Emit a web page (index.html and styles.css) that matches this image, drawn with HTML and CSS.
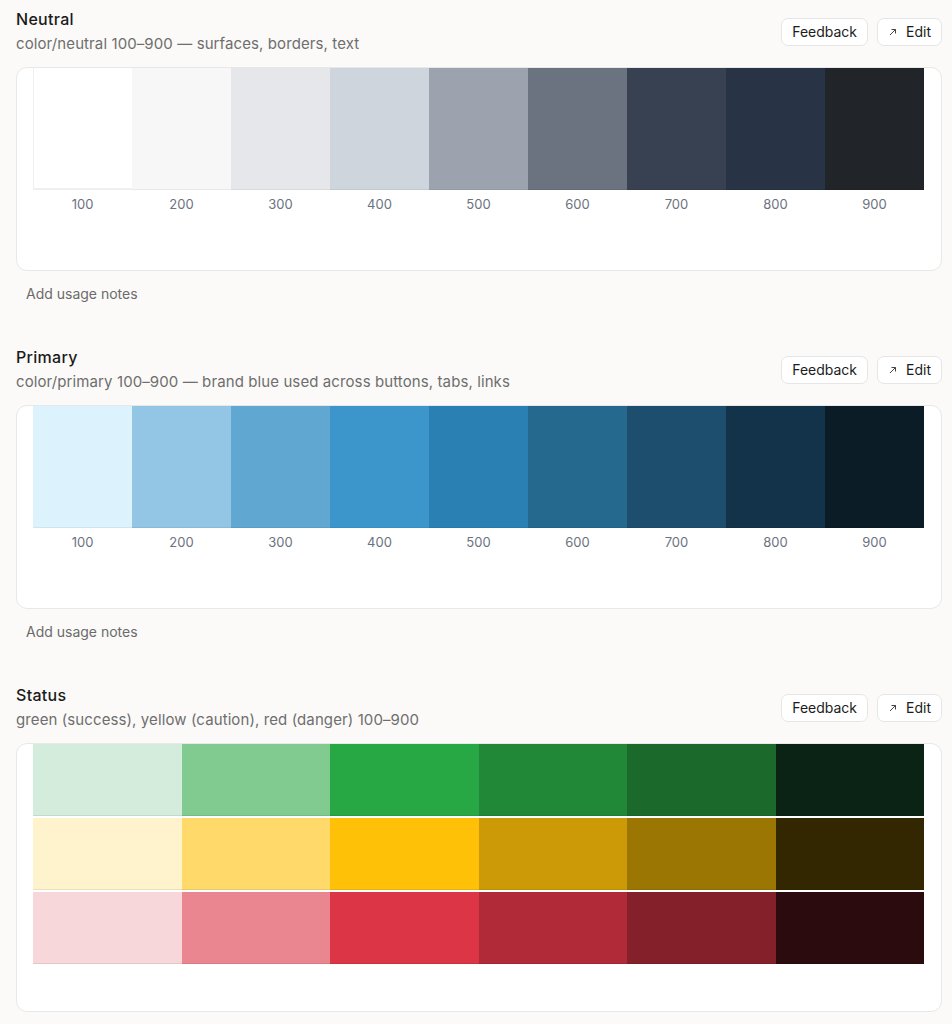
FILE: index.html
```html
<!DOCTYPE html>
<html lang="en">
<head>
<meta charset="utf-8">
<title>Color tokens</title>
<link rel="stylesheet" href="styles.css">
</head>
<body>
<main class="page">

  <section class="section">
    <header class="head">
      <div class="head-text">
        <h2 class="title">Neutral</h2>
        <p class="subtitle">color/neutral 100–900 — surfaces, borders, text</p>
      </div>
      <div class="actions">
        <button class="btn">Feedback</button>
        <button class="btn"><svg class="ico" viewBox="0 0 10 10" width="10" height="10"><path d="M2 8 L7.5 2.5 M3.5 2.5 H7.5 V6.5" fill="none" stroke="currentColor" stroke-width="1"/></svg>Edit</button>
      </div>
    </header>
    <div class="card">
      <div class="scale">
        <div class="cell"><div class="swatch sw-border" style="background:#ffffff"></div><span class="lbl">100</span></div>
        <div class="cell"><div class="swatch" style="background:#f7f7f8"></div><span class="lbl">200</span></div>
        <div class="cell"><div class="swatch" style="background:#e5e7eb"></div><span class="lbl">300</span></div>
        <div class="cell"><div class="swatch" style="background:#cfd5dd"></div><span class="lbl">400</span></div>
        <div class="cell"><div class="swatch" style="background:#9ca3af"></div><span class="lbl">500</span></div>
        <div class="cell"><div class="swatch" style="background:#6b7280"></div><span class="lbl">600</span></div>
        <div class="cell"><div class="swatch" style="background:#374151"></div><span class="lbl">700</span></div>
        <div class="cell"><div class="swatch" style="background:#283446"></div><span class="lbl">800</span></div>
        <div class="cell"><div class="swatch" style="background:#212428"></div><span class="lbl">900</span></div>
      </div>
    </div>
    <p class="note">Add usage notes</p>
  </section>

  <section class="section">
    <header class="head">
      <div class="head-text">
        <h2 class="title">Primary</h2>
        <p class="subtitle">color/primary 100–900 — brand blue used across buttons, tabs, links</p>
      </div>
      <div class="actions">
        <button class="btn">Feedback</button>
        <button class="btn"><svg class="ico" viewBox="0 0 10 10" width="10" height="10"><path d="M2 8 L7.5 2.5 M3.5 2.5 H7.5 V6.5" fill="none" stroke="currentColor" stroke-width="1"/></svg>Edit</button>
      </div>
    </header>
    <div class="card">
      <div class="scale">
        <div class="cell"><div class="swatch" style="background:#dcf3fe"></div><span class="lbl">100</span></div>
        <div class="cell"><div class="swatch" style="background:#93c5e4"></div><span class="lbl">200</span></div>
        <div class="cell"><div class="swatch" style="background:#60a8d2"></div><span class="lbl">300</span></div>
        <div class="cell"><div class="swatch" style="background:#3d96cb"></div><span class="lbl">400</span></div>
        <div class="cell"><div class="swatch" style="background:#2b80b3"></div><span class="lbl">500</span></div>
        <div class="cell"><div class="swatch" style="background:#25698f"></div><span class="lbl">600</span></div>
        <div class="cell"><div class="swatch" style="background:#1e4e6d"></div><span class="lbl">700</span></div>
        <div class="cell"><div class="swatch" style="background:#12334a"></div><span class="lbl">800</span></div>
        <div class="cell"><div class="swatch" style="background:#0b1c26"></div><span class="lbl">900</span></div>
      </div>
    </div>
    <p class="note">Add usage notes</p>
  </section>

  <section class="section">
    <header class="head">
      <div class="head-text">
        <h2 class="title">Status</h2>
        <p class="subtitle">green (success), yellow (caution), red (danger) 100–900</p>
      </div>
      <div class="actions">
        <button class="btn">Feedback</button>
        <button class="btn"><svg class="ico" viewBox="0 0 10 10" width="10" height="10"><path d="M2 8 L7.5 2.5 M3.5 2.5 H7.5 V6.5" fill="none" stroke="currentColor" stroke-width="1"/></svg>Edit</button>
      </div>
    </header>
    <div class="card card-status">
      <div class="status-rows">
        <div class="row">
          <div class="block" style="background:#d4ecdb"></div>
          <div class="block" style="background:#82cb90"></div>
          <div class="block" style="background:#28a745"></div>
          <div class="block" style="background:#218838"></div>
          <div class="block" style="background:#1b6a2c"></div>
          <div class="block" style="background:#0b2314"></div>
        </div>
        <div class="row">
          <div class="block" style="background:#fff3cd"></div>
          <div class="block" style="background:#ffda6a"></div>
          <div class="block" style="background:#ffc107"></div>
          <div class="block" style="background:#cc9a06"></div>
          <div class="block" style="background:#9c7602"></div>
          <div class="block" style="background:#332701"></div>
        </div>
        <div class="row">
          <div class="block" style="background:#f8d7da"></div>
          <div class="block" style="background:#ea868f"></div>
          <div class="block" style="background:#dc3545"></div>
          <div class="block" style="background:#b02a37"></div>
          <div class="block" style="background:#842029"></div>
          <div class="block" style="background:#2c0b0e"></div>
        </div>
      </div>
    </div>
  </section>

</main>
</body>
</html>
```

FILE: styles.css
```css
* { box-sizing: border-box; }

html, body {
  margin: 0;
  padding: 0;
}

body {
  background: #fbfaf8;
  font-family: Inter, "Noto Sans", "Liberation Sans", sans-serif;
  color: #1c1c1c;
}

.page {
  padding: 0 10px 0 16px;
}

.section {
  padding-top: 9px;
}

.section + .section {
  margin-top: 34px;
}

.head {
  display: flex;
  justify-content: space-between;
  align-items: center;
}

.title {
  margin: 0;
  font-size: 16px;
  line-height: 20px;
  font-weight: 500;
  color: #1a1a1a;
  letter-spacing: 0.3px;
}

.subtitle {
  margin: 5px 0 0;
  font-size: 15px;
  line-height: 20px;
  color: #6e6e6e;
  letter-spacing: 0.1px;
}

.actions {
  display: flex;
  gap: 9px;
}

.btn {
  display: inline-flex;
  align-items: center;
  gap: 8px;
  height: 28px;
  padding: 0 10px;
  background: #ffffff;
  border: 1px solid #e6e6e6;
  border-radius: 7px;
  font-family: inherit;
  font-size: 14px;
  color: #1c1c1c;
}

.ico {
  color: #444;
}

.card {
  margin-top: 13px;
  background: #ffffff;
  border: 1px solid #e8e8e8;
  border-radius: 11px;
  padding: 0 17px 58px 16px;
}

.scale {
  display: grid;
  grid-template-columns: repeat(9, 1fr);
}

.cell {
  display: flex;
  flex-direction: column;
  align-items: center;
}

.swatch {
  width: 100%;
  height: 122px;
  box-shadow: inset 0 -1px 0 rgba(0, 0, 0, 0.06);
}

.sw-border {
  border: 1px solid #efefef;
  border-top: none;
  border-right: none;
}

.lbl {
  margin-top: 6px;
  font-size: 13px;
  line-height: 16px;
  color: #6b7280;
}

.note {
  margin: 13px 0 0 10px;
  font-size: 14px;
  line-height: 20px;
  color: #6b6b6b;
}

.card-status {
  padding-bottom: 47px;
}

.status-rows {
  display: flex;
  flex-direction: column;
  gap: 2px;
}

.row {
  display: grid;
  grid-template-columns: repeat(6, 1fr);
  height: 72px;
}

.block {
  box-shadow: inset 0 -1px 0 rgba(0, 0, 0, 0.08);
}
```
